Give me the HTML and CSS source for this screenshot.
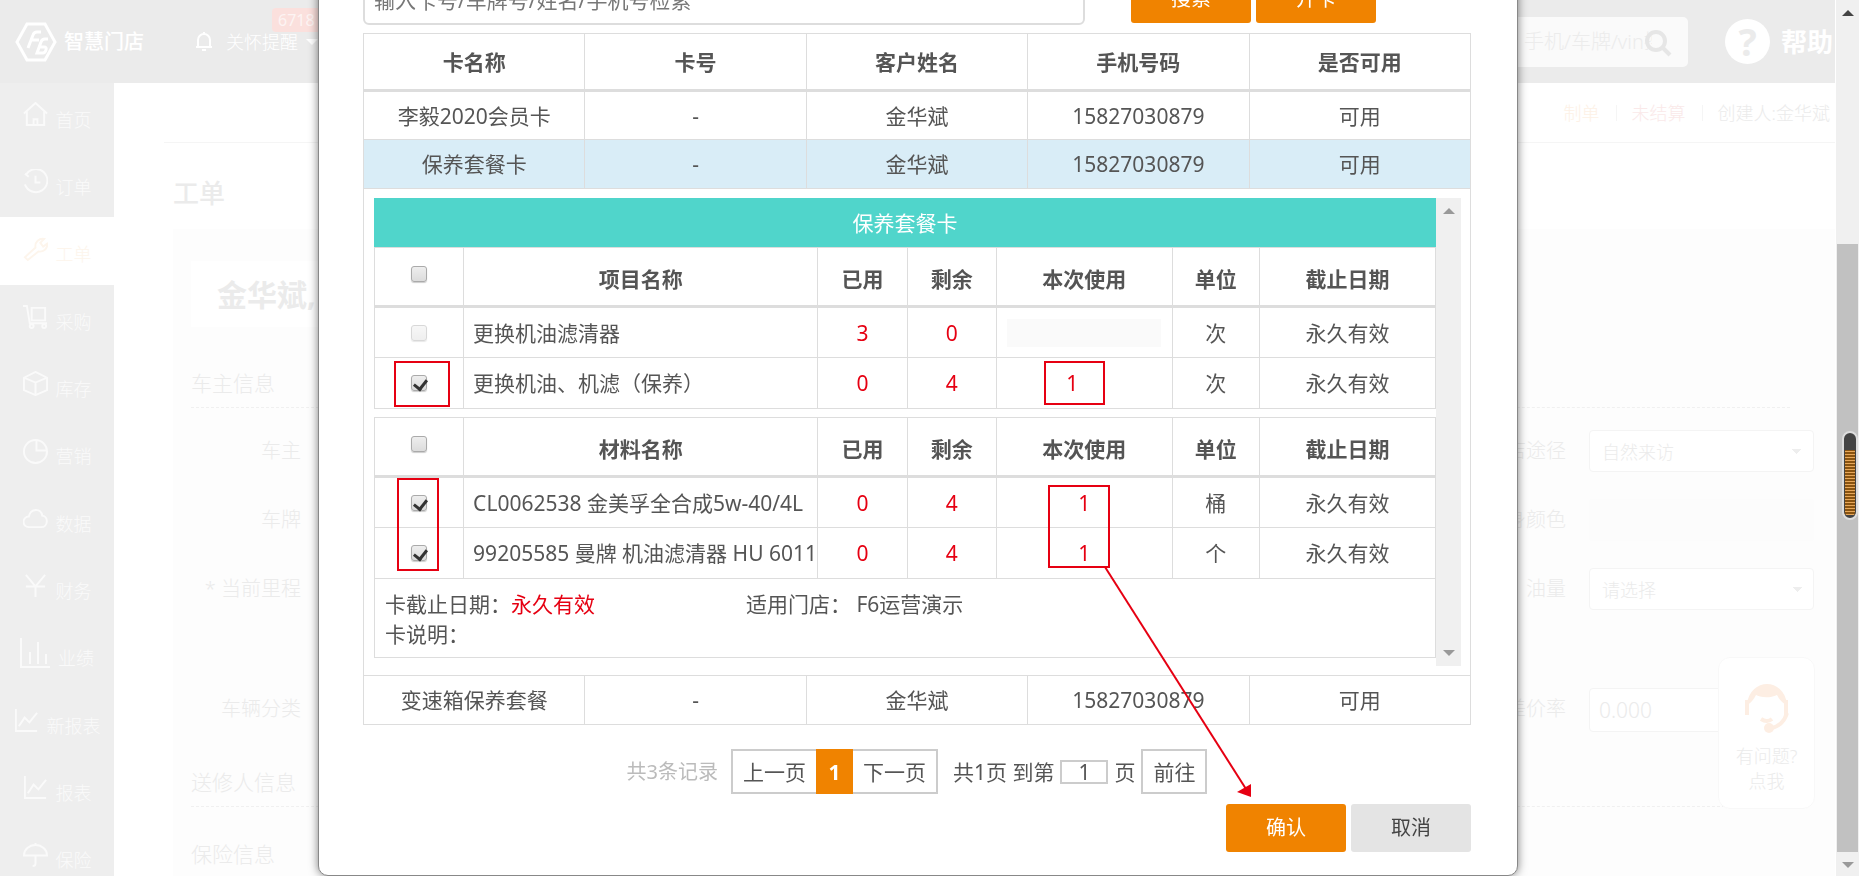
FILE: index.html
```html
<!DOCTYPE html>
<html lang="zh-CN">
<head>
<meta charset="utf-8">
<title>工单</title>
<link rel="stylesheet" href="styles.css">
</head>
<body>
<svg class="defs" aria-hidden="true">
  <symbol id="i-chart" viewBox="0 0 26 26"><path d="M2 1v23h22M5 19l6-9 5 5 8-10"/></symbol>
</svg>
<div class="app">
  <header class="topbar">
    <a class="brand" href="#">
      <svg class="logo" viewBox="0 0 42 40"><path d="M12 2h18l10 18-10 18H12L2 20z"/><path d="M13 26l5-13q1-3 4-3h4M16 18h8M33 17h-3q-3 0-4 3l-4 11h6q2 0 3-3t-2-3h-4"/></svg>
      <span>智慧门店</span>
    </a>
    <a class="notice" href="#">
      <svg class="bell" viewBox="0 0 16 22"><path d="M2 16V9a6 6 0 0 1 12 0v7zM0 16h16M8 1v2M6 19h4"/></svg>
      <span>关怀提醒</span><i class="caret"></i>
      <b class="badge">6718</b>
    </a>
    <div class="search">
      <input type="text" aria-label="搜索" placeholder="手机/车牌/vin搜索">
      <svg class="glass" viewBox="0 0 28 28"><circle cx="12" cy="12" r="9"/><path d="M18 18l8 8"/></svg>
    </div>
    <a class="help" href="#"><span class="help-mark">?</span><span>帮助</span></a>
  </header>

  <div class="body">
    <nav class="side">
      <a href="#"><svg viewBox="0 0 26 26"><path d="M1 12L13 1l12 11M4 10v14h18V10M11 24v-6h4v6"/></svg>首页</a>
      <a href="#"><svg viewBox="0 0 26 26"><path d="M3 6a12 12 0 1 1-1 10M2 5l4 3M13 7v7h5"/></svg>订单</a>
      <a class="on" href="#"><svg viewBox="0 0 26 26"><path d="M2 21l11-10c-1-6 4-10 9-9l-4 4 3 4 4-3c1 5-4 9-9 8L5 24z"/></svg>工单</a>
      <a href="#"><svg viewBox="0 0 26 26"><path d="M0 2h4l3 18h18M9 4h14v13H9z"/><circle cx="9" cy="23" r="2"/><circle cx="22" cy="23" r="2"/></svg>采购</a>
      <a href="#"><svg viewBox="0 0 26 26"><path d="M13 1l12 6v13l-12 5-12-5V7zM1 7l12 5 12-5M13 12v13"/></svg>库存</a>
      <a href="#"><svg viewBox="0 0 26 26"><circle cx="13" cy="13" r="12"/><path d="M14 1v11h11"/></svg>营销</a>
      <a href="#"><svg viewBox="0 0 26 26"><path d="M6 22a5 5 0 0 1 0-11c2-9 13-9 14-1 7 1 6 12-1 12z"/></svg>数据</a>
      <a href="#"><svg viewBox="0 0 26 26"><path d="M3 2l10 12L23 2M3 14h20M13 14v11"/></svg>财务</a>
      <a href="#"><svg class="wide" viewBox="0 0 30 30"><path d="M1 0v29h29M10 26V14M18 26V4M26 26V16"/></svg>业绩</a>
      <a href="#"><svg><use href="#i-chart"/></svg>新报表</a>
      <a href="#"><svg><use href="#i-chart"/></svg>报表</a>
      <a href="#"><svg viewBox="0 0 26 26"><path d="M1 13a12 11 0 0 1 24 0zM13 13v8q0 3-3 3M13 0v2"/></svg>保险</a>
    </nav>

    <main class="page">
      <div class="status">
        <span class="s-orange">制单</span><span class="s-red">未结算</span><span>创建人:金华斌</span>
      </div>
      <h1>工单</h1>
      <section class="panel">
        <div class="owner">金华斌,</div>
        <h2 class="ruled">车主信息</h2>
        <div class="fields">
          <span>车主</span><label for="way">到店途径</label><select id="way"><option>自然来访</option></select>
          <span>车牌</span><label for="color">车身颜色</label><input id="color" class="plain" type="text" disabled>
          <span>* 当前里程</span><label for="oil">油量</label><select id="oil"><option>请选择</option></select>
        </div>
        <div class="fields late">
          <span>车辆分类</span><label for="rate">差价率</label><input id="rate" type="text" value="0.000">
        </div>
        <h2 class="ruled near">送修人信息</h2>
        <h2>保险信息</h2>
      </section>
    </main>
  </div>
</div>

<a class="service" href="#">
  <svg viewBox="0 0 50 50"><path class="hair" d="M5 22C6 8 16 1 25 1s19 7 20 21c-5-2-8-6-10-10-8 4-18 2-21 0-2 4-5 8-9 10z"/><path d="M5 17v15M44 17v15M45 30q-4 13-16 15M19 36q6 4 11 0"/><circle class="hair" cx="27" cy="45" r="5"/></svg>
  <span>有问题?</span><span>点我</span>
</a>

<div class="winbar" aria-hidden="true">
  <i class="up dark"></i>
  <div class="thumb"></div>
  <i class="down"></i>
  <div class="gauge"></div>
</div>

<div class="overlay">
  <div class="modal" role="dialog" aria-label="选择会员卡">
    <div class="find">
      <input type="text" aria-label="检索" placeholder="输入卡号/车牌号/姓名/手机号检索">
      <button class="btn" type="button">搜索</button>
      <button class="btn" type="button">开卡</button>
    </div>

    <table class="cards">
      <thead><tr><th>卡名称</th><th>卡号</th><th>客户姓名</th><th>手机号码</th><th>是否可用</th></tr></thead>
      <tbody>
        <tr><td>李毅2020会员卡</td><td>-</td><td>金华斌</td><td>15827030879</td><td>可用</td></tr>
        <tr class="sel"><td>保养套餐卡</td><td>-</td><td>金华斌</td><td>15827030879</td><td>可用</td></tr>
        <tr><td class="detail" colspan="5">
          <div class="scroll">
            <div class="scroll-main">
              <table class="items">
                <colgroup><col class="c-check"><col class="c-name"><col class="c-num"><col class="c-num"><col class="c-wide"><col class="c-unit"><col class="c-wide"></colgroup>
                <thead>
                  <tr><td class="banner" colspan="7">保养套餐卡</td></tr>
                  <tr><th><input type="checkbox" aria-label="全选项目"></th><th>项目名称</th><th>已用</th><th>剩余</th><th>本次使用</th><th>单位</th><th>截止日期</th></tr>
                </thead>
                <tbody>
                  <tr><td><input type="checkbox" aria-label="更换机油滤清器" disabled></td><td class="name">更换机油滤清器</td><td class="red">3</td><td class="red">0</td><td><input class="use" type="text" aria-label="本次使用" disabled></td><td>次</td><td>永久有效</td></tr>
                  <tr><td><input type="checkbox" aria-label="更换机油、机滤" checked></td><td class="name">更换机油、机滤（保养）</td><td class="red">0</td><td class="red">4</td><td><input class="use spin" type="text" aria-label="本次使用" value="1"></td><td>次</td><td>永久有效</td></tr>
                </tbody>
              </table>
              <table class="items second">
                <colgroup><col class="c-check"><col class="c-name"><col class="c-num"><col class="c-num"><col class="c-wide"><col class="c-unit"><col class="c-wide"></colgroup>
                <thead>
                  <tr><th><input type="checkbox" aria-label="全选材料"></th><th>材料名称</th><th>已用</th><th>剩余</th><th>本次使用</th><th>单位</th><th>截止日期</th></tr>
                </thead>
                <tbody>
                  <tr><td><input type="checkbox" aria-label="CL0062538" checked></td><td class="name">CL0062538 金美孚全合成5w-40/4L</td><td class="red">0</td><td class="red">4</td><td><input class="use" type="text" aria-label="本次使用" value="1"></td><td>桶</td><td>永久有效</td></tr>
                  <tr><td><input type="checkbox" aria-label="99205585" checked></td><td class="name">99205585 曼牌 机油滤清器 HU 6011</td><td class="red">0</td><td class="red">4</td><td><input class="use" type="text" aria-label="本次使用" value="1"></td><td>个</td><td>永久有效</td></tr>
                </tbody>
              </table>
              <div class="info">
                <span>卡截止日期：<em>永久有效</em></span><span>适用门店： F6运营演示</span>
                <span>卡说明：</span>
              </div>
            </div>
            <div class="track" aria-hidden="true"><i class="up"></i><i class="down"></i></div>
          </div>
        </td></tr>
        <tr><td>变速箱保养套餐</td><td>-</td><td>金华斌</td><td>15827030879</td><td>可用</td></tr>
      </tbody>
    </table>

    <div class="pager">
      <span class="total">共3条记录</span>
      <div class="pages"><button type="button">上一页</button><button type="button" class="now">1</button><button type="button">下一页</button></div>
      <label for="goto">共1页 到第</label><input id="goto" type="text" value="1"><span>页</span>
      <button type="button" class="go">前往</button>
    </div>
    <div class="actions">
      <button class="btn" type="button">确认</button>
      <button class="btn grey" type="button">取消</button>
    </div>

    <svg class="marks" viewBox="319 0 1198 875" aria-hidden="true">
      <rect x="395" y="362" width="54" height="44"/>
      <rect x="1045" y="362" width="59" height="42"/>
      <rect x="398" y="479" width="40" height="91"/>
      <rect x="1049" y="486" width="60" height="81"/>
      <path d="M1105 567L1246 789"/>
      <path class="tip" d="M1237 792l14-8v13z"/>
    </svg>
  </div>
</div>
</body>
</html>
```
FILE: styles.css
```css
* { box-sizing: border-box; }
html, body { height: 100%; }
body {
  margin: 0;
  overflow: hidden;
  background: #fff;
  color: #555;
  font-family: "Noto Sans", "Noto Sans CJK SC", sans-serif;
  font-size: 21px;
  line-height: 30px;
  font-weight: 300;
}
a { color: inherit; text-decoration: none; }
input, button, select { font: inherit; color: inherit; margin: 0; border-radius: 0; }
svg { fill: none; stroke: currentColor; stroke-width: 2; }
.defs { position: absolute; width: 0; height: 0; }

/* page behind the dialog */
.app { height: 100vh; margin-right: 24px; overflow: hidden; }
.topbar {
  display: flex;
  align-items: center;
  height: 83px;
  padding-left: 15px;
  background: #ebebeb;
  color: #fff;
}
.brand { display: flex; align-items: center; gap: 7px; font-size: 20px; font-weight: 500; }
.logo { width: 42px; height: 40px; stroke-width: 3; }
.notice { position: relative; display: flex; align-items: center; margin-left: 52px; font-size: 18px; }
.bell { width: 16px; height: 22px; margin-right: 14px; }
.caret { margin-left: 8px; border: 6px solid transparent; border-top-color: #fff; border-bottom: 0; }
.badge {
  position: absolute;
  left: 76px;
  top: -19px;
  padding: 0 6px;
  border-radius: 4px;
  background: #fbe0dd;
  color: #fdf4f3;
  font-size: 16px;
  font-weight: 400;
  line-height: 24px;
}
.search { position: relative; margin-left: auto; }
.search input {
  width: 200px;
  height: 50px;
  padding: 0 36px;
  border: 0;
  border-radius: 5px;
  background: #fafafa;
  font-size: 20px;
}
.search input::placeholder { color: #ececec; }
.glass { position: absolute; right: 16px; top: 12px; width: 28px; height: 28px; color: #e6e6e6; stroke-width: 4; }
.help { display: flex; align-items: center; gap: 11px; margin-left: 37px; padding-right: 2px; font-size: 26px; font-weight: 700; }
.help-mark { width: 45px; height: 45px; border-radius: 50%; background: #fff; color: #ebebeb; font-size: 38px; line-height: 45px; text-align: center; }

.body { display: flex; }
.side { flex: none; width: 114px; background: #eee; color: #fafafa; font-size: 18px; }
.side a { display: flex; align-items: center; justify-content: center; gap: 8px; height: 67px; padding-top: 6px; }
.side a:nth-child(3n) { height: 68px; }
.side svg { flex: none; width: 25px; height: 25px; margin-bottom: 10px; }
.side .wide { width: 30px; height: 30px; }
.side .on { background: #fff; color: #fdf5ec; }

.page { flex: 1; margin-left: 50px; color: #ebebeb; }
.status { display: flex; justify-content: flex-end; height: 60px; border-bottom: 1px solid #f5f5f5; font-size: 18px; line-height: 61px; }
.status span { padding: 0 5px 0 16px; }
.status span + span { background: linear-gradient(#f5f5f5, #f5f5f5) 0 22px / 1px 16px no-repeat; }
.status span:not(:last-child) { padding-right: 16px; }
.status .s-orange { color: #fdf1e6; }
.status .s-red { color: #fae9e9; }
h1 { margin: 34px 0 20px 9px; font-size: 26px; line-height: 32px; font-weight: 500; }
.panel { margin-left: 9px; padding: 32px 21px 40px 18px; background: #fdfdfd; }
.owner { width: 45%; height: 66px; padding-left: 26px; background: #fff; font-size: 30px; font-weight: 700; line-height: 68px; }
h2 { margin: 23px 24px 0 0; font-size: 21px; font-weight: 300; line-height: 48px; }
.ruled { border-bottom: 1px dashed #f0f0f0; }
.owner + .ruled { margin-top: 32px; }
.near { margin-top: 26px; }
.fields { display: grid; grid-template-columns: 110px 1fr 225px; gap: 27px 23px; margin-top: 22px; font-size: 20px; line-height: 42px; text-align: right; }
.fields.late { margin-top: 78px; }
.fields select, .fields input { height: 42px; padding: 0 12px; border: 1px solid #f4f4f4; border-radius: 4px; background: #fff; font-size: 18px; }
.fields select {
  appearance: none;
  background: linear-gradient(to bottom left, #eee 50%, transparent 50%) right 16px center / 5px 5px no-repeat,
    linear-gradient(to bottom right, #eee 50%, transparent 50%) right 11px center / 5px 5px no-repeat, #fff;
}
.fields .plain { background: #fcfcfc; border-color: #fcfcfc; }
.fields.late input { height: 44px; padding: 0 9px; font-size: 21px; }

.service {
  position: fixed;
  right: 44px;
  top: 657px;
  display: flex;
  flex-direction: column;
  align-items: center;
  width: 97px;
  height: 152px;
  padding-top: 25px;
  border: 1px solid #f8f8f8;
  border-radius: 12px;
  background: #fff;
  color: #ebebeb;
  font-size: 18px;
  line-height: 25px;
}
.service svg { width: 50px; height: 50px; margin-bottom: 11px; color: #fdeee3; stroke-width: 4; }
.service .hair { fill: #fdeee3; stroke: none; }

/* window scroll bar */
.winbar {
  position: fixed;
  inset: 0 0 0 auto;
  display: flex;
  flex-direction: column;
  align-items: center;
  justify-content: space-between;
  width: 23px;
  padding: 10px 0 8px;
  background: #f0f0f0;
}
.thumb { flex: 1; width: 21px; margin: 228px 0 10px; background: #c1c1c1; }
.up, .down { border: 6px solid transparent; }
.up { border-top: 0; border-bottom-color: #999; }
.down { border-bottom: 0; border-top-color: #999; }
.up.dark { border-bottom-color: #444; }
.gauge {
  position: absolute;
  right: 1px;
  top: 431px;
  width: 16px;
  height: 89px;
  border: 2px solid #ddd;
  border-radius: 8px;
  background: linear-gradient(#444 0 17px, transparent 17px 82px, #444 82px), repeating-linear-gradient(#e8a85a 0 1px, #8a5410 1px 3px);
  box-shadow: inset 0 0 0 1px #444;
}

/* dialog */
.overlay { position: fixed; inset: 0 23px 0 0; display: flex; justify-content: center; align-items: flex-end; overflow: hidden; }
.modal {
  position: relative;
  flex: none;
  width: 1200px;
  max-width: 96%;
  padding: 45px 46px 23px 44px;
  border: 1px solid #888;
  border-radius: 10px;
  background: #fff;
  box-shadow: 0 0 10px rgba(0, 0, 0, .5);
  font-weight: 400;
}
.find { display: flex; align-items: flex-start; gap: 5px; }
.find input { width: 722px; max-width: 66%; height: 50px; margin-right: 41px; padding: 0 9px; border: 2px solid #ddd; border-radius: 6px; }
.find input::placeholder { color: #777; }
.btn { width: 120px; height: 48px; padding: 0; border: 0; border-radius: 3px; background: #f08300; color: #fff; font-size: 20px; }
.btn.grey { background: #e4e4e4; color: #444; }

table { width: 100%; table-layout: fixed; border-collapse: collapse; text-align: center; }
td, th { padding: 0; border: 1px solid #ddd; }
th { border-bottom-width: 3px; font-weight: 700; }
.cards { margin-top: 8px; }
.cards > thead th { height: 57px; }
.cards > tbody > tr > td { height: 49px; }
.sel td { background: #d9edf7; }
.cards .detail { padding: 9px 9px 9px 10px; }
.scroll { display: flex; }
.scroll-main { flex: 1; min-width: 0; padding-bottom: 8px; }
.track { display: flex; flex-direction: column; align-items: center; justify-content: space-between; width: 25px; padding: 10px 0; background: #f0f0f0; }
.c-check, .c-num { width: 8.4%; }
.c-name { width: 33.4%; }
.c-wide { width: 16.6%; }
.c-unit { width: 8.2%; }
.items td { height: 51px; }
.items th { height: 59px; padding-top: 4px; }
.items .banner { height: 49px; border-color: #50d5cb #50d5cb #ddd; background: #50d5cb; color: #fff; }
.second { margin-top: 8px; }
.items .name { padding: 0 0 0 9px; overflow: hidden; white-space: nowrap; text-align: left; }
.red, em { color: #e60012; font-style: normal; }
.info { display: grid; grid-template-columns: 361px 1fr; height: 79px; padding: 10px; border: 1px solid #ddd; border-top: 0; text-align: left; }

input[type="checkbox"] {
  appearance: none;
  display: block;
  width: 16px;
  height: 16px;
  margin: 0 auto;
  border: 1px solid #aaa;
  border-radius: 3px;
  background: linear-gradient(#eee, #dcdcdc);
  box-shadow: 0 1px 1px #ccc;
}
th input[type="checkbox"] { margin-bottom: 9px; }
input[type="checkbox"]:disabled { opacity: .45; }
input[type="checkbox"]:checked::before {
  content: "";
  display: block;
  width: 6px;
  height: 10px;
  margin: 1px 0 0 4px;
  border: solid #333;
  border-width: 0 3px 3px 0;
  transform: rotate(38deg);
}
.use { display: block; width: 154px; max-width: 90%; height: 28px; margin: 0 auto; padding: 0; border: 0; background: none; color: #e60012; text-align: center; }
.use:disabled { background: #fafafa; }
.use.spin { padding-right: 24px; }

.pager { display: flex; align-items: center; justify-content: center; gap: 6px; margin-top: 24px; }
.pager button { height: 45px; padding: 0 10px; border: 2px solid #ccc; background: #fff; }
.pages { display: flex; margin: 0 9px 0 7px; }
.pages button:first-child { border-right: 0; }
.pages button:last-child { border-left: 0; }
.pager .now { width: 37px; border: 0; background: #f08300; color: #fff; font-weight: 700; }
.total { color: #bbb; font-size: 20px; }
.pager input { width: 48px; height: 24px; padding: 0; border: 2px solid #ccc; text-align: center; }
.actions { display: flex; justify-content: flex-end; gap: 5px; margin-top: 10px; }

.marks { position: absolute; left: 0; bottom: 0; width: 1198px; height: 875px; color: #e60012; pointer-events: none; }
.marks .tip { fill: currentColor; stroke: none; }
```
